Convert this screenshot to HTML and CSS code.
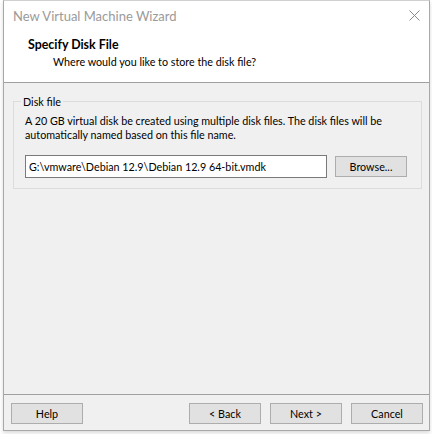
FILE: index.html
```html
<!DOCTYPE html>
<html>
<head>
<meta charset="utf-8">
<link rel="stylesheet" href="styles.css">
</head>
<body>
<div class="window">
  <div class="titlebar">
    <span class="title">New Virtual Machine Wizard</span>
    <svg class="close" width="11" height="11" viewBox="0 0 11 11"><path d="M0.5 0.5L10.5 10.5M10.5 0.5L0.5 10.5" stroke="#8a8a8a" stroke-width="1" fill="none"/></svg>
  </div>
  <div class="header">
    <div class="h-title">Specify Disk File</div>
    <div class="h-sub">Where would you like to store the disk file?</div>
  </div>
  <div class="content">
    <div class="group">
      <div class="legend">Disk file</div>
      <p class="desc">A 20 GB virtual disk be created using multiple disk files. The disk files will be automatically named based on this file name.</p>
      <div class="filerow">
        <div class="input">G:\vmware\Debian 12.9\Debian 12.9 64-bit.vmdk</div>
        <div class="btn">Browse...</div>
      </div>
    </div>
  </div>
  <div class="footer">
    <div class="btn">Help</div>
    <div class="spacer"></div>
    <div class="btn">&lt; Back</div>
    <div class="btn">Next &gt;</div>
    <div class="btn">Cancel</div>
  </div>
</div>
</body>
</html>
```

FILE: styles.css
```css
* { box-sizing: border-box; }
html, body { margin: 0; padding: 0; background: #ffffff; }
body {
  font-family: Lato, "Liberation Sans", Arial, sans-serif;
  font-size: 10.75px;
  color: #000;
  width: 432px;
  height: 434px;
  overflow: hidden;
}
.window {
  margin-left: 3px;
  width: 427px;
  height: 431px;
  border: 1px solid #a8a8a8;
  border-top-color: #d0d0d0;
  background: #f0f0f0;
  display: flex;
  flex-direction: column;
  box-shadow: 0 2px 4px rgba(0,0,0,0.15);
}
.titlebar {
  height: 31px;
  background: #ffffff;
  display: flex;
  align-items: center;
  justify-content: space-between;
  padding: 0 9px 0 9px;
}
.title {
  font-size: 13px;
  color: #9a9a9a;
  margin-top: -1px;
}
.close { margin-top: -3px; }
.header {
  height: 51px;
  background: #ffffff;
  border-bottom: 1px solid #a0a0a0;
  padding: 6px 0 0 24px;
}
.h-title {
  font-weight: bold;
  font-size: 12.4px;
  line-height: 14px;
}
.h-sub {
  padding-left: 25px;
  margin-top: 3px;
  line-height: 14px;
}
.content {
  flex: 1;
  padding: 18px 7px 0 9px;
}
.group {
  border: 1px solid #dcdcdc;
  padding: 0 8px 10px 11px;
}
.legend {
  width: fit-content;
  margin: -7px 0 0 -4px;
  padding: 0 2px;
  background: #f0f0f0;
  line-height: 14px;
}
.desc {
  margin: 5px 0 0 0;
  line-height: 14px;
}
.filerow {
  margin-top: 13px;
  display: flex;
  align-items: center;
  gap: 8px;
}
.input {
  width: 302px;
  height: 23px;
  border: 1px solid #7a7a7a;
  background: #fff;
  padding: 3px 0 0 3px;
  line-height: 15px;
  white-space: nowrap;
  overflow: hidden;
}
.btn {
  width: 72px;
  height: 21px;
  border: 1px solid #adadad;
  background: #e1e1e1;
  display: flex;
  align-items: center;
  justify-content: center;
  line-height: 14px;
}
.footer {
  height: 36px;
  border-top: 1px solid #a0a0a0;
  display: flex;
  align-items: flex-start;
  padding: 8px 6px 0 7px;
  gap: 9px;
}
.spacer { flex: 1; }
```
